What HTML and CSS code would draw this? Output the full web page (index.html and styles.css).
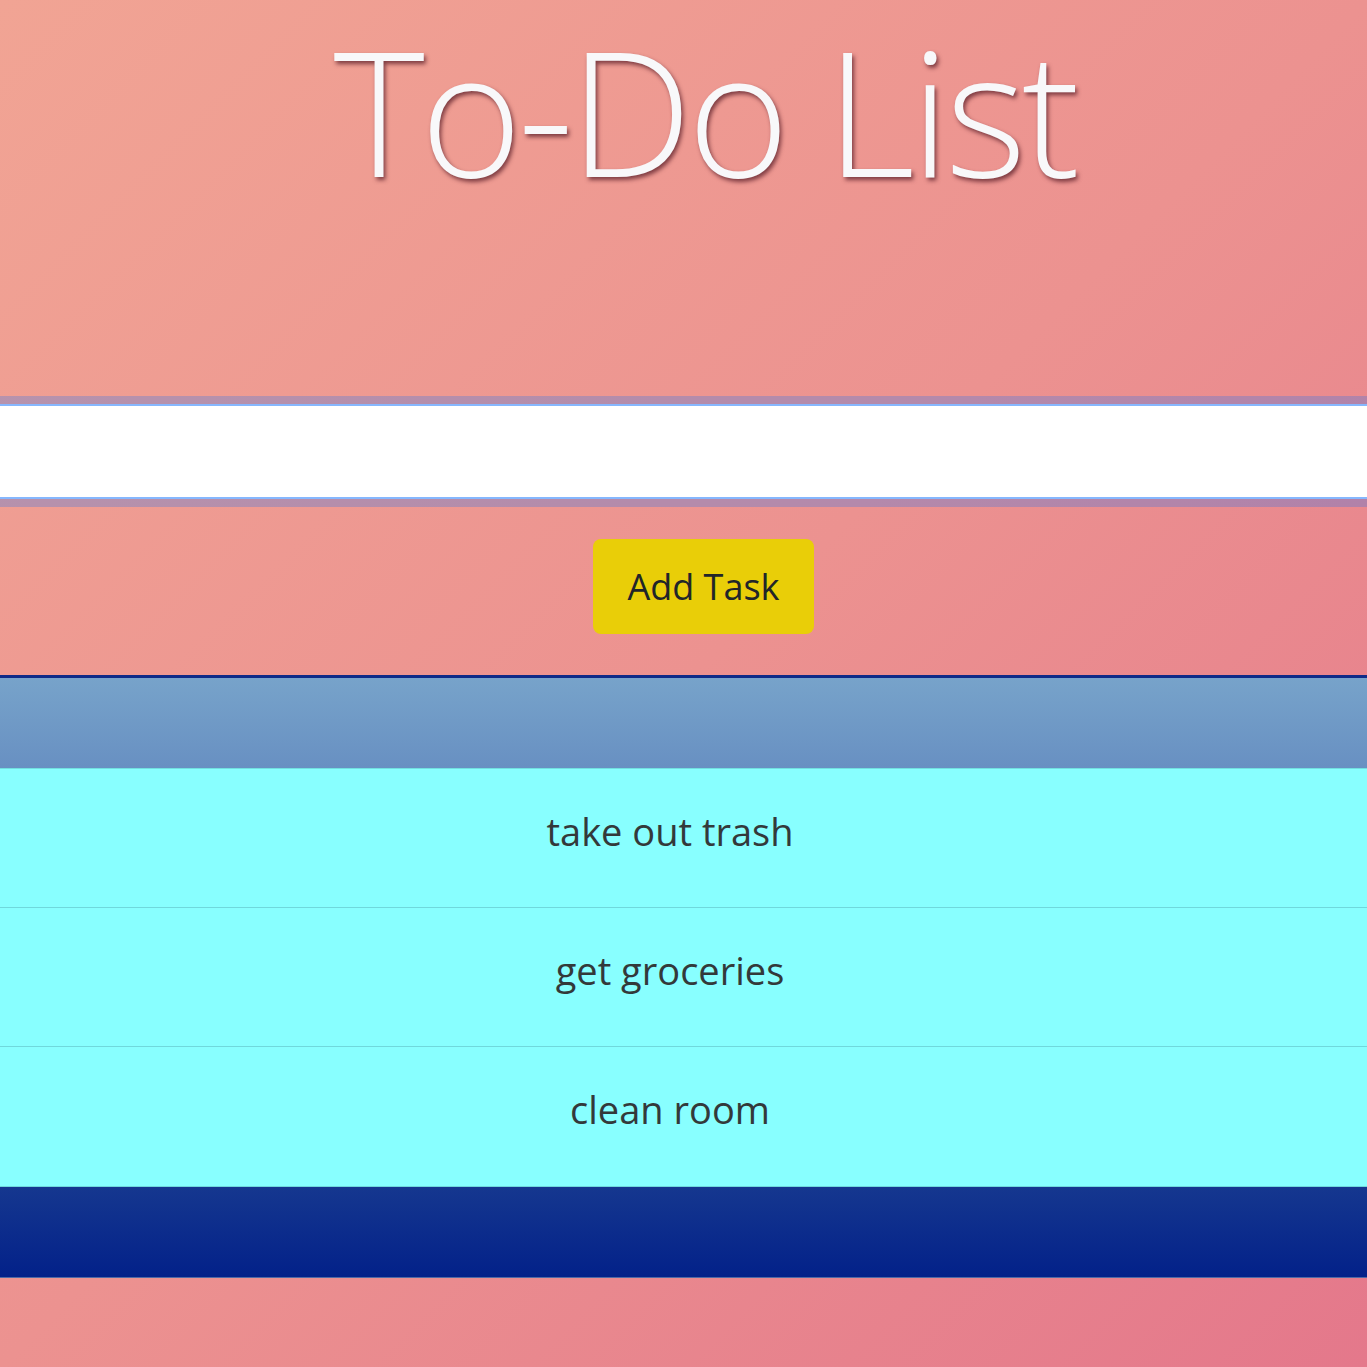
FILE: index.html
```html
<!DOCTYPE html>
<html lang="en">
<head>
<meta charset="utf-8">
<title>To-Do List</title>
<link rel="stylesheet" href="styles.css">
</head>
<body>
  <header class="hero">
    <h1 class="title">To-Do List</h1>
  </header>
  <form class="task-form">
    <input class="task-input" type="text" aria-label="New task">
    <div class="actions">
      <button class="add-btn" type="button">Add Task</button>
    </div>
  </form>
  <section class="task-list">
    <div class="list-head"></div>
    <ul class="items">
      <li class="item">take out trash</li>
      <li class="item">get groceries</li>
      <li class="item">clean room</li>
    </ul>
    <div class="list-foot"></div>
  </section>
</body>
</html>
```
FILE: styles.css
```css
html, body {
  margin: 0;
  padding: 0;
}
body {
  min-height: 1367px;
  background: linear-gradient(135deg, #f1a494 0%, #ec9290 50%, #e4788b 100%);
  font-family: "Open Sans", "Noto Sans", sans-serif;
  color: #343434;
  overflow: hidden;
}
.hero {
  height: 404px;
  padding: 1px 0 0 42px;
  box-sizing: border-box;
}
.title {
  margin: 0;
  text-align: center;
  font-weight: 300;
  font-size: 174px;
  line-height: 1.25;
  letter-spacing: -4.5px;
  color: #f8f8fa;
  text-shadow: 2px 3px 4px rgba(90, 30, 40, 0.75);
}
.task-input {
  display: block;
  width: 100%;
  height: 95px;
  box-sizing: border-box;
  margin: 0;
  border: 2px solid #86b7fe;
  border-left: 0;
  border-right: 0;
  background: #fff;
  box-shadow: 0 0 0 8px rgba(13, 110, 253, 0.25);
  outline: none;
  font-size: 32px;
}
.actions {
  display: flex;
  justify-content: center;
  padding: 40px 0 41px 40px;
}
.add-btn {
  width: 221px;
  height: 95px;
  border: none;
  border-radius: 8px;
  background: #e9ce08;
  color: #212529;
  font-family: "Open Sans", "Noto Sans", sans-serif;
  font-size: 36px;
  padding: 0 0 0 0;
}
.task-list {
  border-top: 3px solid #0e2a88;
}
.list-head {
  height: 90px;
  background: linear-gradient(to bottom, #77a3ca, #6890c2);
  border-bottom: 1px solid #72e0e0;
}
.items {
  list-style: none;
  margin: 0;
  padding: 0;
}
.item {
  height: 139px;
  box-sizing: border-box;
  padding: 36px 27px 0 0;
  text-align: center;
  background: #88ffff;
  border-bottom: 1px solid #70d8dc;
  font-size: 38px;
  line-height: 52px;
  color: #33393a;
}
.item:last-child {
  height: 140px;
}
.list-foot {
  height: 90px;
  background: linear-gradient(to bottom, #15378f, #032189);
  border-bottom: 1px solid #4f6aa6;
}
```
